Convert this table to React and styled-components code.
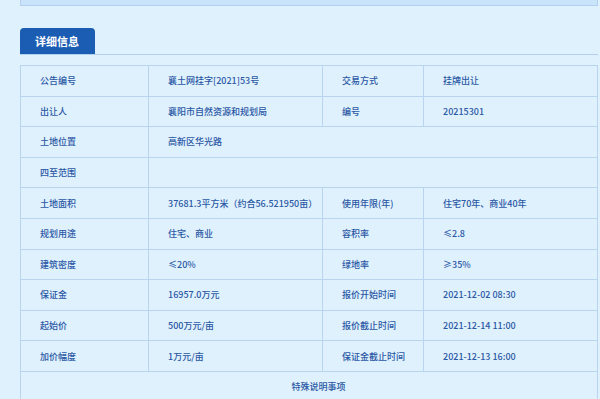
import React from 'react';
import styled, { createGlobalStyle } from 'styled-components';

const GlobalStyle = createGlobalStyle`
  html, body {
    margin: 0;
    padding: 0;
    background: #e0f1fe;
    font-family: "Noto Sans CJK SC", "Liberation Sans", sans-serif;
  }
`;

const rows = [
  [['公告编号', '襄土网挂字[2021]53号'], ['交易方式', '挂牌出让']],
  [['出让人', '襄阳市自然资源和规划局'], ['编号', '20215301']],
  [['土地位置', '高新区华光路']],
  [['四至范围', '']],
  [['土地面积', '37681.3平方米（约合56.521950亩）'], ['使用年限(年)', '住宅70年、商业40年']],
  [['规划用途', '住宅、商业'], ['容积率', '≤2.8']],
  [['建筑密度', '≤20%'], ['绿地率', '≥35%']],
  [['保证金', '16957.0万元'], ['报价开始时间', '2021-12-02 08:30']],
  [['起始价', '500万元/亩'], ['报价截止时间', '2021-12-14 11:00']],
  [['加价幅度', '1万元/亩'], ['保证金截止时间', '2021-12-13 16:00']],
];

const App = () => {
  return (
    <>
      <GlobalStyle />
      <Page>
        <TopPanel />
        <TabBar>
          <Tab>详细信息</Tab>
        </TabBar>
        <Table>
          <colgroup>
            <col style={{ width: 128 }} />
            <col style={{ width: 174 }} />
            <col style={{ width: 101 }} />
            <col />
          </colgroup>
          <tbody>
            {rows.map((row, i) => (
              <tr key={i}>
                {row.length === 2 ? (
                  row.flatMap(([label, value]) => [
                    <Cell key={label}>{label}</Cell>,
                    <Cell key={label + 'v'}>{value}</Cell>,
                  ])
                ) : (
                  <>
                    <Cell>{row[0][0]}</Cell>
                    <Cell colSpan={3}>{row[0][1]}</Cell>
                  </>
                )}
              </tr>
            ))}
            <tr>
              <Cell colSpan={4} $center>特殊说明事项</Cell>
            </tr>
          </tbody>
        </Table>
      </Page>
    </>
  );
};

const Page = styled.div`
  margin-left: 20px;
  width: 578px;
`;

const TopPanel = styled.div`
  height: 5px;
  background: #c9e3fb;
  border: 1px solid #b3d1ee;
  border-top: none;
`;

const TabBar = styled.div`
  margin-top: 22px;
  height: 26px;
  border-bottom: 1px solid #b3d1ee;
  display: flex;
  align-items: flex-end;
`;

const Tab = styled.div`
  width: 75px;
  height: 26px;
  background: #1a5db3;
  border-radius: 4px 4px 0 0;
  color: #fff;
  font-size: 11px;
  font-weight: bold;
  line-height: 26px;
  padding-left: 15px;
  box-sizing: border-box;
`;

const Table = styled.table`
  margin-top: 10px;
  width: 578px;
  border-collapse: collapse;
  table-layout: fixed;
  background: #e0f1fe;
`;

const Cell = styled.td`
  height: 29.6px;
  padding: 0 0 0 19px;
  border: 1px solid #b8d4ee;
  color: #2a58a4;
  font-size: 9px;
  font-weight: 500;
  text-align: ${(p) => (p.$center ? 'center' : 'left')};
  white-space: nowrap;
`;

export default App;
